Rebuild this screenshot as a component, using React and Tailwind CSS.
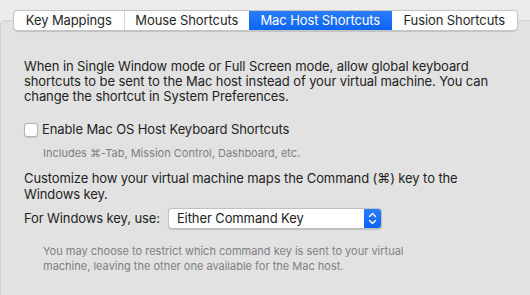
import React from "react";

const tabs = ["Key Mappings", "Mouse Shortcuts", "Mac Host Shortcuts", "Fusion Shortcuts"];
const widths = ["w-[110px]", "w-[126px]", "w-[143px]", "w-[126px]"];

export default function App() {
  return (
    <div
      className="w-[530px] h-[295px] overflow-hidden bg-[#ececec] text-[#222222]"
      style={{ fontFamily: "Inter, 'Liberation Sans', sans-serif" }}
    >
      <div className="relative z-10 ml-[13px] mt-[10px] flex h-[21px] w-[505px] overflow-hidden rounded-[5px] border border-[#c4c4c4] bg-white shadow-[0_0.5px_1px_rgba(0,0,0,0.15)]">
        {tabs.map((t, i) => {
          const active = i === 2;
          return (
            <div
              key={t}
              className={
                (active
                  ? "bg-gradient-to-b from-[#2a7cf9] to-[#0a64f6] text-white "
                  : "bg-white text-[#262626] ") +
                (i === 1 ? "border-l border-[#d6d6d6] " : "") +
                widths[i] +
                " flex items-center justify-center text-[13px] leading-none tracking-[-0.1px]"
              }
            >
              {t}
            </div>
          );
        })}
      </div>
      <div className="-mt-[11px] h-[300px] w-[540px] rounded-tl-[5px] border-l border-t border-[#d2d2d2] bg-[#e2e2e2] pl-[23px] pt-[38px]">
        <p className="w-[480px] text-[13px] leading-[15px] tracking-[-0.1px]">
          When in Single Window mode or Full Screen mode, allow global keyboard shortcuts to be sent to the Mac host instead of your virtual machine. You can change the shortcut in System Preferences.
        </p>
        <label className="mt-[18px] flex h-[16px] items-center gap-[4px] text-[13px] tracking-[-0.1px]">
          <span className="h-[14px] w-[14px] rounded-[3px] border border-[#b3b3b3] bg-white shadow-[0_0.5px_1px_rgba(0,0,0,0.1)]" />
          <span>Enable Mac OS Host Keyboard Shortcuts</span>
        </label>
        <p className="ml-[19px] mt-[8px] text-[11px] leading-[14px] text-[#808080]">
          Includes ⌘-Tab, Mission Control, Dashboard, etc.
        </p>
        <p className="mt-[10px] w-[480px] text-[13px] leading-[16px] tracking-[-0.1px]">
          Customize how your virtual machine maps the Command (⌘) key to the Windows key.
        </p>
        <div className="mt-[6px] flex items-center gap-[8px]">
          <span className="text-[13px] tracking-[-0.1px]">For Windows key, use:</span>
          <div className="flex h-[21px] w-[214px] overflow-hidden rounded-[4px] border border-[#c0c0c0] bg-white shadow-[0_0.5px_1px_rgba(0,0,0,0.15)]">
            <span className="flex flex-1 items-center pl-[8px] text-[13px] tracking-[-0.1px]">Either Command Key</span>
            <span className="flex w-[17px] items-center justify-center bg-gradient-to-b from-[#2a7cf9] to-[#0a64f6]">
              <svg width="9" height="13" viewBox="0 0 9 13" fill="none" stroke="white" strokeWidth="1.4" strokeLinecap="round" strokeLinejoin="round">
                <path d="M1.5 4.5 L4.5 1.5 L7.5 4.5" />
                <path d="M1.5 8.5 L4.5 11.5 L7.5 8.5" />
              </svg>
            </span>
          </div>
        </div>
        <p className="ml-[19px] mt-[15px] w-[400px] text-[11px] leading-[15px] text-[#808080]">
          You may choose to restrict which command key is sent to your virtual machine, leaving the other one available for the Mac host.
        </p>
      </div>
    </div>
  );
}
